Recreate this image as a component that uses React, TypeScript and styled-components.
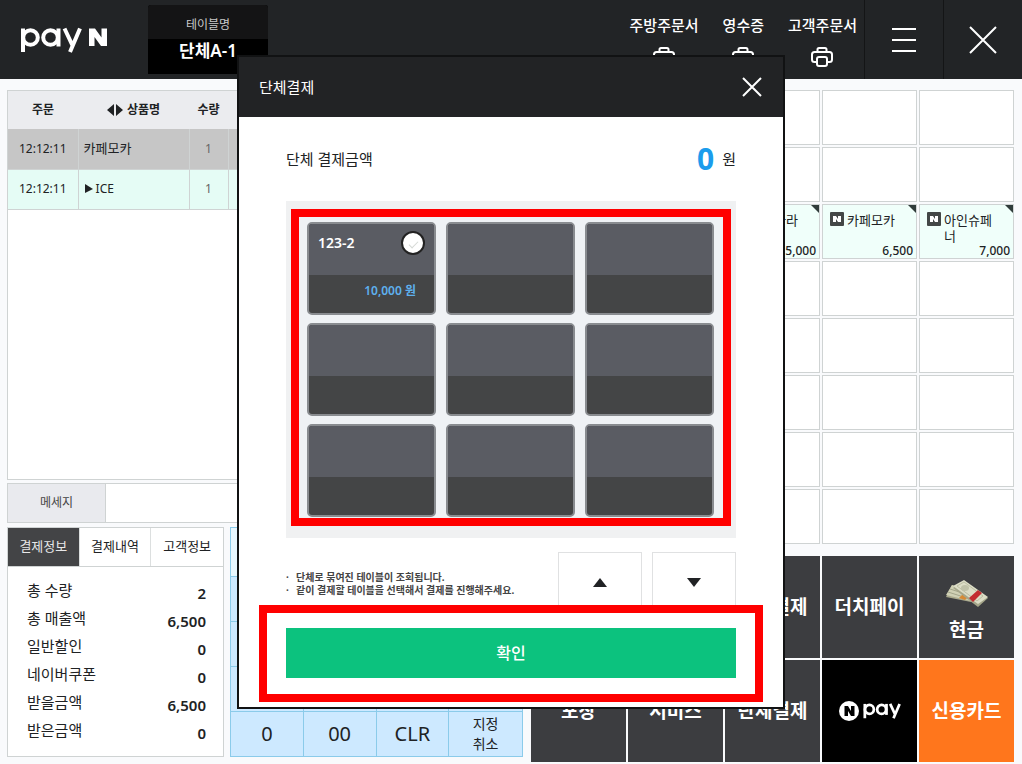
import React from "react";
import styled, { createGlobalStyle, css } from "styled-components";

const GlobalStyle = createGlobalStyle`
  *, *::before, *::after { box-sizing: border-box; }
  body {
    margin: 0;
    background: #f9fafc;
    color: #202224;
    font-family: "Noto Sans", "Noto Sans CJK KR", sans-serif;
    font-size: 12px;
    line-height: 16px;
  }
  button, input { font: inherit; color: inherit; }
  button { margin: 0; padding: 0; border: 0; background: none; cursor: pointer; }
  dl, dd, ul, h1, h2, p { margin: 0; padding: 0; }
`;

/* ---------- top bar ---------- */

const TopBar = styled.header`
  display: flex;
  height: 79px;
  background: #222426;
  color: #fff;
`;

const Brand = styled.a`
  display: flex;
  align-items: center;
  width: 148px;
  padding-left: 20px;
  color: #fff;
`;

const TableName = styled.div`
  width: 120px;
  height: 69px;
  margin-top: 5px;
  border-radius: 3px 3px 0 0;
  background: #000;
  text-align: center;
  overflow: hidden;
`;

const TableNameLabel = styled.div`
  height: 34px;
  padding-top: 3px;
  background: #141415;
  color: #c9c9c9;
  line-height: 34px;
`;

const TableNameValue = styled.div`
  font-size: 17px;
  font-weight: 600;
  line-height: 24px;
`;

const PrintGroup = styled.div`
  display: flex;
  gap: 24px;
  margin-left: auto;
  padding: 13px 7px 0 0;
`;

const PrintButton = styled.button`
  display: flex;
  flex-direction: column;
  align-items: center;
  gap: 8px;
  font-size: 15px;
  font-weight: 500;
  line-height: 24px;
`;

const BarButton = styled.button`
  display: grid;
  place-items: center;
  width: 79px;
  border-left: 1px solid #141516;
`;

/* ---------- page body ---------- */

const Body = styled.main`
  display: grid;
  grid-template-columns: 516fr 483fr;
  gap: 8px;
  padding: 11px 8px 2px 7px;
`;

const Column = styled.div`
  display: flex;
  flex-direction: column;
  min-width: 0;
`;

const OrderPanel = styled.section`
  height: 390px;
  border: 1px solid #cfd3d3;
  background: #fff;
`;

const OrderTable = styled.table`
  width: 100%;
  border-collapse: collapse;
  table-layout: fixed;
  th, td {
    height: 40px;
    padding: 0;
    border-right: 1px solid #cfd3d3;
    border-bottom: 1px solid #cfd3d3;
    font-weight: 400;
    text-align: center;
  }
  th {
    height: 38px;
    border: 0;
    background: #ebecef;
    font-weight: 700;
  }
  td:nth-child(2) { padding-left: 5px; text-align: left; }
  td:nth-child(3) { color: #666; }
`;

const OrderRow = styled.tr<{ $selected?: boolean }>`
  background: ${(p) => (p.$selected ? "#c6c6c6" : "#e5fcf5")};
`;

const ItemName = styled.span`
  font-size: 13px;
`;

const SortLabel = styled.span`
  display: inline-flex;
  align-items: center;
  gap: 4px;
  vertical-align: middle;
`;

const MessageBar = styled.div`
  display: flex;
  height: 40px;
  margin-top: 3px;
  border: 1px solid #cfd3d3;
  background: #fff;
`;

const MessageButton = styled.button`
  width: 98px;
  border-right: 1px solid #cfd3d3;
  background: #e9eaee;
  color: #444;
`;

const MessageInput = styled.input`
  flex: 1;
  min-width: 0;
  border: 0;
  background: none;
`;

const LowerRow = styled.div`
  display: grid;
  grid-template-columns: 217fr 293fr;
  gap: 6px;
  height: 230px;
  margin-top: 4px;
`;

const PayInfo = styled.section`
  border: 1px solid #cfd3d3;
  background: #fff;
`;

const Tabs = styled.div`
  display: grid;
  grid-template-columns: repeat(3, 1fr);
  height: 39px;
  border-bottom: 1px solid #cfd3d3;
`;

const Tab = styled.button<{ $active?: boolean }>`
  padding-bottom: 2px;
  border-right: 1px solid #dcdfdf;
  font-size: 13px;
  &:last-child { border-right: 0; }
  ${(p) => p.$active && css`background: #434446; color: #e8e8e8;`}
`;

const Summary = styled.dl`
  display: grid;
  grid-auto-rows: 28px;
  padding: 9px 17px 0 19px;
`;

const SummaryRow = styled.div`
  display: flex;
  justify-content: space-between;
  font-size: 15px;
  line-height: 28px;
  dd { padding-top: 3px; font-weight: 600; }
`;

const Keypad = styled.div`
  display: grid;
  grid-template-columns: repeat(4, 1fr);
  grid-template-rows: 49px repeat(4, 45px);
  border: 1px solid #8bcbea;
  border-bottom: 0;
`;

const KeypadDisplay = styled.output`
  grid-column: 1 / -1;
  border-bottom: 1px solid #8bcbea;
  background: #e8f7fe;
`;

const Key = styled.button<{ $small?: boolean }>`
  border-right: 1px solid #8bcbea;
  border-bottom: 1px solid #8bcbea;
  background: #cde9ff;
  font-size: ${(p) => (p.$small ? "14px" : "20px")};
  line-height: 20px;
  white-space: pre-line;
  &:nth-child(4n + 1) { border-right: 0; }
`;

/* ---------- products and payment buttons ---------- */

const ProductGrid = styled.div`
  display: grid;
  grid-template-columns: repeat(5, 1fr);
  grid-auto-rows: 55px;
  gap: 2px;
`;

const Product = styled.button<{ $filled?: boolean }>`
  position: relative;
  display: grid;
  grid-template-columns: 14px 1fr;
  grid-template-rows: 31px 16px;
  column-gap: 3px;
  padding: 7px 3px 0 7px;
  border: 1px solid #cfd3d3;
  background: ${(p) => (p.$filled ? "#f0fffa" : "#fff")};
  text-align: left;
`;

const ProductName = styled.span`
  padding-right: 14px;
  font-size: 13px;
  word-break: break-all;
`;

const ProductPrice = styled.span`
  grid-column: 1 / -1;
  font-weight: 500;
  text-align: right;
`;

const Corner = styled.i`
  position: absolute;
  top: 0;
  right: 0;
  border-top: 8px solid #303c3a;
  border-left: 8px solid transparent;
`;

const PayGrid = styled.div`
  display: grid;
  grid-template-columns: repeat(5, 1fr);
  grid-auto-rows: 102px;
  gap: 2px;
  margin-top: 12px;
`;

const PayButton = styled.button<{ $tone?: string; $picture?: boolean }>`
  display: flex;
  flex-direction: column;
  align-items: center;
  justify-content: center;
  gap: 10px;
  padding-top: ${(p) => (p.$picture ? "7px" : "0")};
  background: ${(p) => p.$tone ?? "#3c3d40"};
  color: #fff;
  font-size: 19px;
  font-weight: 700;
  line-height: 24px;
`;

/* ---------- dialog ---------- */

const Overlay = styled.div`
  position: fixed;
  inset: 0;
  display: grid;
  place-items: center;
`;

const Dialog = styled.section`
  width: 548px;
  border: 2px solid #111213;
  background: #fff;
`;

const DialogHeader = styled.header`
  display: flex;
  align-items: center;
  justify-content: space-between;
  height: 60px;
  padding: 0 21px 0 20px;
  background: #222325;
  color: #fff;
  h2 { font-size: 15px; font-weight: 400; }
`;

const CloseButton = styled.button`
  display: grid;
`;

const DialogBody = styled.div`
  padding: 0 20px 5px;
`;

const AmountRow = styled.div`
  display: flex;
  align-items: center;
  justify-content: space-between;
  height: 84px;
  padding: 0 27px;
  font-size: 15px;
`;

const Amount = styled.span`
  display: flex;
  align-items: center;
  gap: 8px;
  strong { color: #1b9cec; font-size: 30px; line-height: 32px; font-weight: 700; }
`;

const TablePanel = styled.div`
  margin: 0 27px;
  padding: 8px 5px 12px;
  background: #f0f1f2;
`;

const TableGrid = styled.div`
  display: grid;
  grid-template-columns: repeat(3, 1fr);
  grid-auto-rows: 93px;
  gap: 8px 10px;
  padding: 5px 9px 1px 8px;
  border: 8px solid #f00;
  background: #eff2f5;
`;

const TableCard = styled.label`
  display: grid;
  grid-template-rows: 51px 1fr;
  border: 2px solid #898c90;
  border-radius: 5px;
  background: #444546;
  color: #fff;
  overflow: hidden;
`;

const CardTop = styled.span`
  display: flex;
  align-items: center;
  justify-content: space-between;
  padding: 0 9px 13px;
  background: #5a5c63;
  font-size: 14px;
  font-weight: 600;
`;

const CardPrice = styled.span`
  padding: 8px 18px 0 0;
  color: #5eb0ee;
  font-weight: 600;
  text-align: right;
`;

const CardCheck = styled.input`
  appearance: none;
  width: 24px;
  height: 24px;
  margin: 0;
  border: 2px solid #222;
  border-radius: 50%;
  background: #fff;
  display: grid;
  place-items: center;
  &::after {
    content: "";
    width: 9px;
    height: 5px;
    border-left: 1px solid #d5d9d5;
    border-bottom: 1px solid #d5d9d5;
    transform: rotate(-45deg);
  }
`;

const NoticeRow = styled.div`
  display: flex;
  align-items: flex-end;
  gap: 10px;
  height: 67px;
  padding: 0 27px;
`;

const Notice = styled.ul`
  flex: 1;
  padding-bottom: 8px;
  list-style: none;
  color: #444;
  font-size: 10px;
  font-weight: 700;
  line-height: 13px;
  white-space: nowrap;
  li::before { content: "·"; display: inline-block; width: 10px; }
`;

const PageButton = styled.button`
  display: grid;
  place-items: center;
  width: 84px;
  height: 53px;
  padding-top: 6px;
  border: 1px solid #e0e1e2;
  border-bottom: 0;
`;

const ConfirmFrame = styled.div`
  padding: 15px 19px 16px;
  border: 8px solid #f00;
`;

const Confirm = styled.button`
  display: block;
  width: 100%;
  height: 50px;
  background: #0cc27e;
  color: #fff;
  font-size: 16px;
  font-weight: 500;
`;

/* ---------- drawings ---------- */

const PayLetters = () => (
  <g fill="none" stroke="currentColor">
    <path d="M3 1.500v23.500" />
    <circle cx="10.500" cy="10.500" r="7.300" />
    <circle cx="30.500" cy="10.500" r="7.300" />
    <path d="M38.500 1.500v18" />
    <path d="M44.500 1.500l8 17M60 1.500l-10 23.500" />
  </g>
);

const PayNLogo = () => (
  <svg width="88" height="26" viewBox="0 0 88 26" role="img" aria-label="pay N">
    <g strokeWidth="4">
      <PayLetters />
    </g>
    <path fill="currentColor" d="M69 1.500h6l6.500 9v-9H87v17.500h-6l-6.500-9v9H69z" />
  </svg>
);

const NPayLogo = () => (
  <svg width="62" height="22" viewBox="0 0 62 22" role="img" aria-label="N pay">
    <circle cx="10" cy="11" r="10" fill="#fff" />
    <path fill="#000" d="M5.500 6h3.500l3 5V6h3.500v10H12l-3-5v5H5.500z" />
    <g strokeWidth="4.500" transform="translate(24 3) scale(0.61)">
      <PayLetters />
    </g>
  </svg>
);

const Printer = () => (
  <svg width="24" height="22" viewBox="0 0 24 22" fill="none" stroke="#fff" strokeWidth="2" aria-hidden="true">
    <path d="M7.500 7V4.500Q7.500 3 9 3h6q1.500 0 1.500 1.500V7" />
    <path d="M6 17H4.500Q2 17 2 14.500V9.500Q2 7 4.500 7h15Q22 7 22 9.500v5q0 2.500-2.500 2.500H18" />
    <rect x="7" y="12" width="10" height="9" rx="2" />
  </svg>
);

const Cross = ({ size }: { size: number }) => (
  <svg width={size} height={size} viewBox={`0 0 ${size} ${size}`} stroke="#fff" strokeWidth="2" aria-hidden="true">
    <path d={`M1 1L${size - 1} ${size - 1}M${size - 1} 1L1 ${size - 1}`} />
  </svg>
);

const Menu = () => (
  <svg width="24" height="24" viewBox="0 0 24 24" stroke="#fff" strokeWidth="2" aria-hidden="true">
    <path d="M0 1h24M0 12h24M0 23h24" />
  </svg>
);

const Triangle = ({ d, w, h }: { d: string; w: number; h: number }) => (
  <svg width={w} height={h} viewBox={`0 0 ${w} ${h}`} fill="#202224" aria-hidden="true">
    <path d={d} />
  </svg>
);

const Cash = () => (
  <svg width="44" height="28" viewBox="0 0 44 28" aria-hidden="true">
    <path d="M1 17L7 5l26 10-7 7z" fill="#a9a98c" />
    <path d="M1 15L7 5l24 10-5 6z" fill="#cfd0b4" />
    <path d="M3 12l22 7M5 9l22 7" stroke="#a3a58a" strokeWidth="1" />
    <path d="M14 18l4-4 4 4-2 2z" fill="#d78a35" />
    <path d="M8 8L19 1l24 17-10 9z" fill="#a5a68a" />
    <path d="M8 6L19 0l24 17-10 7z" fill="#dcddc6" />
    <path d="M12 6l7-4 19 14-6 5z" fill="none" stroke="#bcbea3" />
    <ellipse cx="20" cy="8" rx="4" ry="3" fill="#c0c2a8" />
    <path d="M24 18l9-8 4 3-9 9z" fill="#c32c30" />
  </svg>
);

const NBadge = () => (
  <svg width="14" height="14" viewBox="0 0 14 14" aria-hidden="true">
    <rect width="14" height="14" rx="1" fill="#434746" />
    <path fill="#fff" d="M3 4h3l2 3V4h3v6H8L6 7v3H3z" />
  </svg>
);

/* ---------- data ---------- */

const prints = ["주방주문서", "영수증", "고객주문서"];

const summary = [
  ["총 수량", "2"],
  ["총 매출액", "6,500"],
  ["일반할인", "0"],
  ["네이버쿠폰", "0"],
  ["받을금액", "6,500"],
  ["받은금액", "0"],
];

const keys = [...Array<string>(12).fill(""), "0", "00", "CLR", "지정\n취소"];

const products: Record<number, [string, string]> = {
  12: ["바닐라라", "5,000"],
  13: ["카페모카", "6,500"],
  14: ["아인슈페너", "7,000"],
};

export default function App() {
  return (
    <>
      <GlobalStyle />
      <TopBar>
        <Brand href="#"><PayNLogo /></Brand>
        <TableName>
          <TableNameLabel>테이블명</TableNameLabel>
          <TableNameValue>단체A-1</TableNameValue>
        </TableName>
        <PrintGroup>
          {prints.map((name) => (
            <PrintButton key={name}>{name}<Printer /></PrintButton>
          ))}
        </PrintGroup>
        <BarButton aria-label="메뉴"><Menu /></BarButton>
        <BarButton aria-label="닫기"><Cross size={28} /></BarButton>
      </TopBar>

      <Body>
        <Column>
          <OrderPanel>
            <OrderTable>
              <colgroup>
                <col style={{ width: 70 }} />
                <col style={{ width: 111 }} />
                <col style={{ width: 39 }} />
                <col />
              </colgroup>
              <thead>
                <tr>
                  <th>주문</th>
                  <th>
                    <SortLabel>
                      <Triangle w={16} h={12} d="M7 0v12L0 6zM9 0v12l7-6z" />
                      상품명
                    </SortLabel>
                  </th>
                  <th>수량</th>
                  <th />
                </tr>
              </thead>
              <tbody>
                <OrderRow $selected>
                  <td>12:12:11</td><td><ItemName>카페모카</ItemName></td><td>1</td><td />
                </OrderRow>
                <OrderRow>
                  <td>12:12:11</td>
                  <td><Triangle w={9} h={9} d="M1 0v9l8-4z" /> ICE</td>
                  <td>1</td><td />
                </OrderRow>
              </tbody>
            </OrderTable>
          </OrderPanel>
          <MessageBar>
            <MessageButton>메세지</MessageButton>
            <MessageInput aria-label="메세지" />
          </MessageBar>
          <LowerRow>
            <PayInfo>
              <Tabs>
                <Tab $active>결제정보</Tab>
                <Tab>결제내역</Tab>
                <Tab>고객정보</Tab>
              </Tabs>
              <Summary>
                {summary.map(([label, value]) => (
                  <SummaryRow key={label}><dt>{label}</dt><dd>{value}</dd></SummaryRow>
                ))}
              </Summary>
            </PayInfo>
            <Keypad>
              <KeypadDisplay />
              {keys.map((k, i) => (
                <Key key={i} $small={k.includes("\n")}>{k}</Key>
              ))}
            </Keypad>
          </LowerRow>
        </Column>

        <Column>
          <ProductGrid>
            {Array.from({ length: 40 }, (_, i) => {
              const item = products[i];
              return (
                <Product key={i} $filled={!!item}>
                  {item && (
                    <>
                      <NBadge />
                      <ProductName>{item[0]}</ProductName>
                      <ProductPrice>{item[1]}</ProductPrice>
                      <Corner />
                    </>
                  )}
                </Product>
              );
            })}
          </ProductGrid>
          <PayGrid>
            <PayButton />
            <PayButton />
            <PayButton>복합결제</PayButton>
            <PayButton>더치페이</PayButton>
            <PayButton $picture><Cash />현금</PayButton>
            <PayButton>포장</PayButton>
            <PayButton>서비스</PayButton>
            <PayButton>단체결제</PayButton>
            <PayButton $tone="#000"><NPayLogo /></PayButton>
            <PayButton $tone="#ff761c">신용카드</PayButton>
          </PayGrid>
        </Column>
      </Body>

      <Overlay>
        <Dialog role="dialog" aria-labelledby="dialog-title">
          <DialogHeader>
            <h2 id="dialog-title">단체결제</h2>
            <CloseButton aria-label="닫기"><Cross size={20} /></CloseButton>
          </DialogHeader>
          <DialogBody>
            <AmountRow>
              단체 결제금액
              <Amount><strong>0</strong>원</Amount>
            </AmountRow>
            <TablePanel>
              <TableGrid>
                {Array.from({ length: 9 }, (_, i) => (
                  <TableCard key={i}>
                    <CardTop>{i === 0 && <>123-2<CardCheck type="checkbox" /></>}</CardTop>
                    <CardPrice>{i === 0 && "10,000 원"}</CardPrice>
                  </TableCard>
                ))}
              </TableGrid>
            </TablePanel>
            <NoticeRow>
              <Notice>
                <li>단체로 묶여진 테이블이 조회됩니다.</li>
                <li>같이 결제할 테이블을 선택해서 결제를 진행해주세요.</li>
              </Notice>
              <PageButton aria-label="이전"><Triangle w={14} h={9} d="M0 9L7 0l7 9z" /></PageButton>
              <PageButton aria-label="다음"><Triangle w={14} h={9} d="M0 0h14L7 9z" /></PageButton>
            </NoticeRow>
            <ConfirmFrame>
              <Confirm>확인</Confirm>
            </ConfirmFrame>
          </DialogBody>
        </Dialog>
      </Overlay>
    </>
  );
}
